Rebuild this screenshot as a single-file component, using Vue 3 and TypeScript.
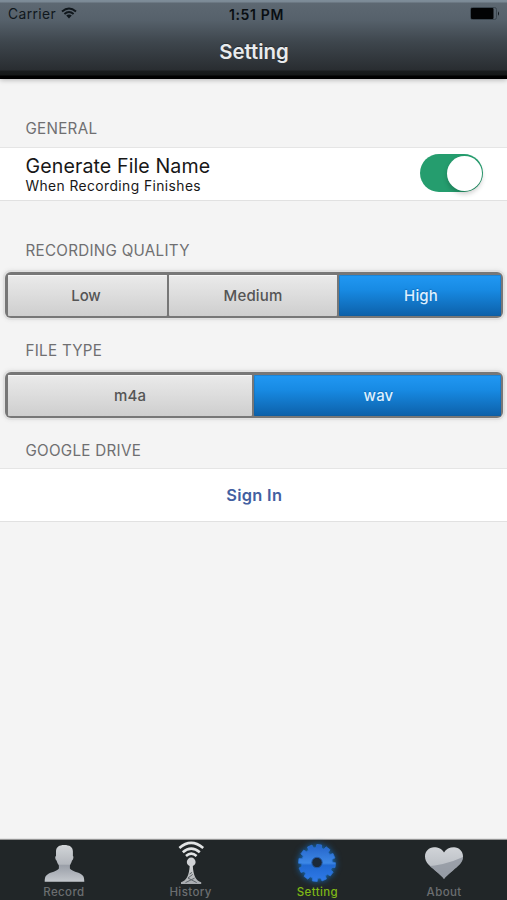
<script setup lang="ts">
import { ref } from 'vue'

const generateName = ref(true)
const quality = ref('High')
const fileType = ref('wav')
const activeTab = ref('Setting')
const qualities = ['Low', 'Medium', 'High']
const fileTypes = ['m4a', 'wav']
const tabs = ['Record', 'History', 'Setting', 'About']

// Outline of a cog with the given number of flat-topped teeth
function gearPath(cx: number, cy: number, outer: number, inner: number, teeth: number): string {
  const step = (Math.PI * 2) / teeth
  const points: string[] = []
  for (let i = 0; i < teeth; i++) {
    const mid = i * step + 0.12
    const corners: [number, number][] = [
      [inner, -0.34],
      [outer, -0.25],
      [outer, 0.25],
      [inner, 0.34],
    ]
    for (const [radius, offset] of corners) {
      const a = mid + offset * step
      points.push(`${(cx + radius * Math.cos(a)).toFixed(2)} ${(cy + radius * Math.sin(a)).toFixed(2)}`)
    }
  }
  return `M${points.join('L')}Z`
}
const gear = gearPath(30, 23, 18.6, 15.4, 12)
</script>

<template>
  <div class="screen">
    <header class="header">
      <div class="status">
        <div class="carrier">
          <span>Carrier</span>
          <svg class="wifi" width="16" height="12" viewBox="0 0 16 12">
            <g fill="none" stroke="#10171c" stroke-width="1.9">
              <path d="M1 4.5Q8-1.7 15 4.5" />
              <path d="M3.4 7Q8 2.9 12.6 7" />
            </g>
            <path d="M5.2 8.6Q8 6.2 10.8 8.6L8 11.4Z" fill="#10171c" />
          </svg>
        </div>
        <span class="time">1:51 PM</span>
        <svg class="battery" width="30" height="13" viewBox="0 0 30 13">
          <rect x=".5" y=".5" width="26" height="12" rx="2" fill="none" stroke="#3c4750" />
          <rect x="1" y="1" width="22.5" height="11" rx="1" fill="#020304" />
          <path d="M28 4.2Q30 6.5 28 8.8Z" fill="#10171c" />
        </svg>
      </div>
      <h1>Setting</h1>
    </header>

    <main class="content">
      <h2 class="first">GENERAL</h2>
      <section class="row">
        <div class="labels">
          <span class="title">Generate File Name</span>
          <span class="subtitle">When Recording Finishes</span>
        </div>
        <button class="switch" :class="{ on: generateName }" role="switch" :aria-checked="generateName" @click="generateName = !generateName">
          <i></i>
        </button>
      </section>

      <h2 class="quality">RECORDING QUALITY</h2>
      <div class="segments three">
        <button v-for="item in qualities" :key="item" :class="{ selected: item === quality }" @click="quality = item">{{ item }}</button>
      </div>

      <h2 class="type">FILE TYPE</h2>
      <div class="segments two">
        <button v-for="item in fileTypes" :key="item" :class="{ selected: item === fileType }" @click="fileType = item">{{ item }}</button>
      </div>

      <h2 class="drive">GOOGLE DRIVE</h2>
      <section class="row sign"><button class="link">Sign In</button></section>
    </main>

    <nav class="tabs">
      <button v-for="tab in tabs" :key="tab" class="tab" :class="{ active: tab === activeTab }" @click="activeTab = tab">
        <svg v-if="tab === 'Record'" width="60" height="45" viewBox="0 0 60 45">
          <defs>
            <linearGradient id="person" x1="0" y1="0" x2="0" y2="1">
              <stop offset="0" stop-color="#d2d5d8" /><stop offset=".52" stop-color="#b3b7bd" />
              <stop offset=".56" stop-color="#9a9fa8" /><stop offset="1" stop-color="#c4c8cd" />
            </linearGradient>
          </defs>
          <path fill="url(#person)" d="M30.2 5C35.5 5 38.9 7 38.9 11.5V16C40 16.2 39.2 20 38 20.6C37.4 23.3 36.2 24.5 35.9 25.6V28.6C38 31.5 44 32.2 47.5 34.4C49.7 35.8 50.2 37.5 50.3 41.7H10.7C10.8 37.5 11.3 35.8 13.5 34.4C17 32.2 22.9 31.5 24.9 28.6V25.6C24.3 24.3 23 23 22.6 20.6C21.2 19.8 20.8 16.2 22 16V11.5C22 7 25.3 5 30.2 5Z" />
        </svg>
        <svg v-else-if="tab === 'History'" width="60" height="45" viewBox="0 0 60 45">
          <defs>
            <linearGradient id="mast" x1="0" y1="0" x2="0" y2="1">
              <stop offset="0" stop-color="#d3d5d6" /><stop offset="1" stop-color="#a7aaae" />
            </linearGradient>
          </defs>
          <g fill="none" stroke="#e2e4e5" stroke-width="2.6">
            <path d="M18.4 8Q30-2.1 42.2 8" />
            <path d="M21.8 12.3Q30.2 4.9 38.8 12.3" />
            <path d="M25 16Q30.2 11.4 35.6 16" />
          </g>
          <circle cx="30.2" cy="22" r="4.4" fill="#d0d2d4" />
          <path fill="url(#mast)" d="M28.7 26H31.8C32.3 35.5 35 40.8 40.2 42.3V44H20V42.3C25.2 40.8 28.2 35.5 28.7 26Z" />
          <path d="M24.5 42.6L33.5 38.2M35.7 42.6L27 38L31.7 34.4M28.6 34L31 32.4" fill="none" stroke="#5d6368" stroke-width="1" />
        </svg>
        <svg v-else-if="tab === 'Setting'" class="cog" width="60" height="45" viewBox="0 0 60 45">
          <defs>
            <linearGradient id="cog" x1="0" y1="0" x2="0" y2="1">
              <stop offset="0" stop-color="#2462c8" /><stop offset=".5" stop-color="#3d88e6" />
              <stop offset=".56" stop-color="#2069d2" /><stop offset="1" stop-color="#307ae8" />
            </linearGradient>
          </defs>
          <path :d="gear" fill="url(#cog)" stroke="#2d74d6" stroke-width=".7" stroke-linejoin="round" />
          <circle cx="30" cy="22.5" r="5.2" fill="#1b2939" stroke="#2259a6" />
        </svg>
        <svg v-else width="60" height="45" viewBox="0 0 60 45">
          <defs>
            <linearGradient id="heart" x1="0" y1="0" x2="0" y2="1">
              <stop offset="0" stop-color="#d2d5d9" /><stop offset="1" stop-color="#adb2b9" />
            </linearGradient>
            <clipPath id="heart-shape">
              <path d="M30 39C28.5 36.5 25.8 34.6 21.3 30.7C15.5 25.7 11 22.6 11 16.3C11 11.2 15 7.2 20 7.2C24.3 7.2 28.2 9 30 12.4C31.8 9 35.7 7.2 40 7.2C45 7.2 49 11.2 49 16.3C49 22.6 44.5 25.7 38.7 30.7C34.2 34.6 31.5 36.5 30 39Z" />
            </clipPath>
          </defs>
          <g clip-path="url(#heart-shape)">
            <path d="M10 6H50V40H10Z" fill="url(#heart)" />
            <path d="M10 26.5Q31 25.5 50 16.5V40H10Z" fill="#858c96" opacity=".65" />
          </g>
        </svg>
        <span>{{ tab }}</span>
      </button>
    </nav>
  </div>
</template>

<style>
body { margin: 0; }
</style>

<style scoped>
.screen { width: 507px; height: 900px; display: flex; flex-direction: column; overflow: hidden; background: #f4f4f4; font-family: Inter, sans-serif; }
.screen * { box-sizing: border-box; }
button { border: 0; padding: 0; background: none; font: inherit; }
.header { height: 79px; flex: none; background: linear-gradient(#7e8d99 0, #7b8995 2px, #5d6872 3px, #56616b 20px, #3e464d 42px, #292d31 70px, #191c1d 71px, #151818 75px, #000 76px); box-shadow: 0 1px 5px #0004; }
.status { height: 28px; display: grid; grid-template-columns: 1fr 60px 1fr; align-items: center; padding: 0 7px 0 8px; }
.carrier { display: flex; align-items: center; gap: 5px; font-size: 13.8px; letter-spacing: .4px; color: #10171c; }
.wifi { margin-top: -3px; }
.time { white-space: nowrap; justify-self: center; padding-left: 5px; font-size: 14px; font-weight: 600; letter-spacing: .65px; color: #090e12; }
.battery { justify-self: end; margin-top: -1px; }
h1 { margin: 0; padding-left: 1px; height: 48px; font-size: 20.4px; line-height: 48px; font-weight: 600; text-align: center; color: #e9ebed; text-shadow: 0 -1px 1px #0005; }
.content { flex: 1; display: flex; flex-direction: column; }
h2 { margin: 0; flex: none; padding-left: 25.5px; font-size: 15.2px; line-height: 20px; font-weight: 400; letter-spacing: .27px; color: #6f6f71; }
.first { padding-top: 40px; height: 68px; }
.quality { padding-top: 40px; height: 71px; }
.type { padding-top: 23px; height: 54px; }
.drive { padding-top: 23px; height: 50px; }
.row { height: 54px; flex: none; display: flex; align-items: center; justify-content: space-between; padding: 0 24px 0 25.5px; background: #fff; border-top: 1px solid #e5e5e5; border-bottom: 1px solid #e1e1e1; }
.labels { display: flex; flex-direction: column; color: #171717; padding-top: 2px; }
.title { font-size: 19.6px; line-height: 22px; letter-spacing: .1px; }
.subtitle { font-size: 13.8px; line-height: 19px; letter-spacing: .43px; }
.switch { width: 63px; height: 38px; border-radius: 19px; background: #aaa; padding: 1.5px; display: flex; margin-top: -2px; }
.switch.on { background: #259d6e; justify-content: flex-end; }
.switch i { width: 35px; height: 35px; border-radius: 50%; background: #fff; box-shadow: 0 3px 5px #0003; }
.segments { height: 46px; flex: none; margin: 0 4px 0 5px; display: grid; gap: 2px; padding: 3px 2px 2px 3px; border: 0; border-radius: 6px; background: #777; box-shadow: 0 0 0 2px #e0e0e0, 0 0 4px 2px #e2e2e2; }
.three { grid-template-columns: 159px 168px 1fr; }
.two { grid-template-columns: 244px 1fr; }
.segments button { border-radius: 1px; font-size: 15px; font-weight: 500; letter-spacing: .15px; color: #555; background: linear-gradient(#eaeaea, #dedede 45%, #cecece); box-shadow: inset 0 1px #f7f7f7; }
.three button:first-child { padding-right: 3px; letter-spacing: -.1px; }
.segments button.selected { color: #dff0ff; background: linear-gradient(#2198f3, #188be4 35%, #0c60a9); box-shadow: inset 0 0 0 1px #1459924d; text-shadow: 0 -1px 1px #08498766; }
.two button.selected { padding-left: 2px; }
.three button.selected { padding-left: 2px; }
.sign { justify-content: center; }
.link { font-size: 16.4px; font-weight: 600; letter-spacing: .3px; color: #435fa1; }
.tabs { height: 60px; flex: none; display: grid; grid-template-columns: repeat(4, 1fr); background: #212628; box-shadow: 0 -1px 1px #5559; }
.tab { display: flex; flex-direction: column; align-items: center; justify-content: flex-start; padding-left: 1px; color: #6b6e70; font-size: 11.5px; line-height: 14px; letter-spacing: .4px; font-weight: 500; }
.tab svg { flex: none; }
.tab.active { color: #7eb816; }
.cog { filter: drop-shadow(0 0 3px #126ec3); }
</style>
